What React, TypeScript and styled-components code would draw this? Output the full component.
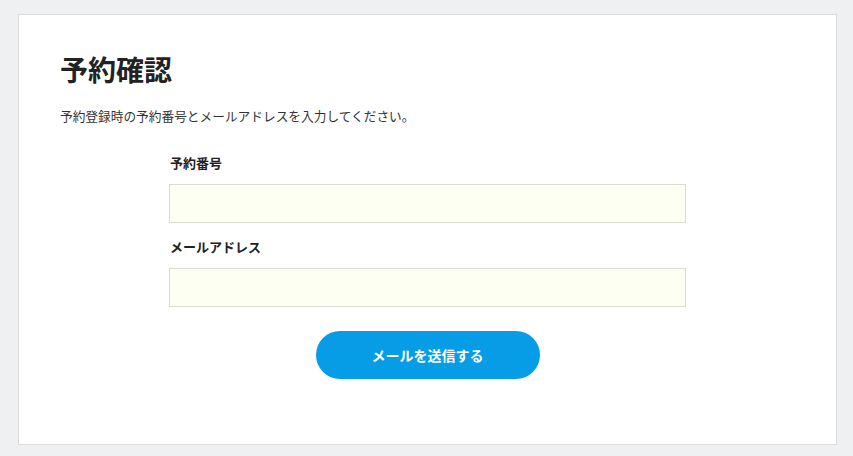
import * as React from "react";
import styled, { createGlobalStyle } from "styled-components";

const GlobalStyle = createGlobalStyle`
  html, body {
    margin: 0;
    padding: 0;
    background: #eff0f2;
  }
  body {
    font-family: "Noto Sans CJK JP", "Noto Sans", sans-serif;
    color: #222;
  }
`;

const Page = styled.div`
  padding: 14px 16px 12px 18px;
`;

const Card = styled.section`
  background: #fff;
  border: 1px solid #dcdcdc;
  padding: 34px 41px 63px;
  min-height: 332px;
`;

const Title = styled.h1`
  margin: 0;
  font-size: 28px;
  line-height: 40px;
  font-weight: 700;
  color: #222;
`;

const Lead = styled.p`
  margin: 17px 0 0;
  font-size: 12.7px;
  line-height: 20px;
  color: #333;
`;

const Form = styled.form`
  width: 517px;
  margin: 27px auto 0;
  display: flex;
  flex-direction: column;
`;

const Field = styled.div`
  display: flex;
  flex-direction: column;
  margin-bottom: 14px;
`;

const Label = styled.label`
  font-size: 13px;
  font-weight: 700;
  line-height: 20px;
  margin: 0 0 11px 1px;
  color: #222;
`;

const Input = styled.input`
  box-sizing: border-box;
  height: 39px;
  border: 1px solid #dcdcd4;
  background: #fefff3;
  padding: 0 10px;
  font-size: 14px;
  outline: none;
`;

const Submit = styled.button`
  align-self: center;
  width: 224px;
  height: 48px;
  margin-top: 10px;
  border: none;
  border-radius: 24px;
  background: #069de6;
  color: #fff;
  font-family: inherit;
  font-size: 14px;
  font-weight: 700;
  cursor: pointer;
`;

export default function App() {
  return (
    <>
      <GlobalStyle />
      <Page>
        <Card>
          <Title>予約確認</Title>
          <Lead>予約登録時の予約番号とメールアドレスを入力してください。</Lead>
          <Form onSubmit={(e) => e.preventDefault()}>
            <Field>
              <Label htmlFor="reserve-no">予約番号</Label>
              <Input id="reserve-no" type="text" name="reserveNo" />
            </Field>
            <Field>
              <Label htmlFor="reserve-mail">メールアドレス</Label>
              <Input id="reserve-mail" type="email" name="email" />
            </Field>
            <Submit type="submit">メールを送信する</Submit>
          </Form>
        </Card>
      </Page>
    </>
  );
}
